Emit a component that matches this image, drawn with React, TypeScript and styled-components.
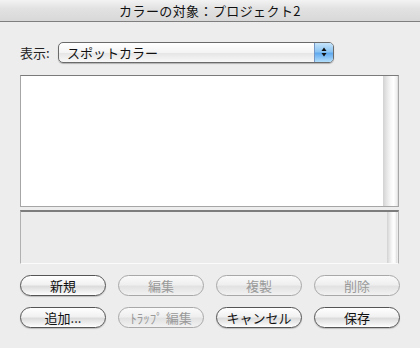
import React from "react";
import styled, { createGlobalStyle, css } from "styled-components";

const Global = createGlobalStyle`
  html, body { margin: 0; padding: 0; background: #ededed; }
  body { font-family: "Noto Sans CJK JP", "Noto Sans", sans-serif; }
`;

const Window = styled.div`
  width: 420px;
  height: 348px;
  background: #ededed;
  display: flex;
  flex-direction: column;
  overflow: hidden;
`;

const TitleBar = styled.div`
  height: 21px;
  border-bottom: 1px solid #7f7f7f;
  background: linear-gradient(#f3f3f3, #e2e2e2 40%, #d8d8d8);
  display: flex;
  align-items: center;
  justify-content: center;
  font-size: 13px;
  color: #111;
  letter-spacing: 0.4px;
`;

const Body = styled.div`
  padding: 19px 21px 0 20px;
  display: flex;
  flex-direction: column;
`;

const ShowRow = styled.div`
  display: flex;
  align-items: center;
  gap: 4px;
  height: 22px;
`;

const Label = styled.span`
  font-size: 13px;
  color: #222;
  width: 34px;
`;

const Popup = styled.div`
  width: 274px;
  height: 19px;
  border: 1px solid #6a6a6a;
  border-radius: 5px;
  background: linear-gradient(#ffffff, #f4f4f4 50%, #e6e6e6 55%, #f8f8f8);
  display: flex;
  align-items: center;
  overflow: hidden;
  box-shadow: 0 1px 1px rgba(0,0,0,0.25);
`;

const PopupText = styled.span`
  flex: 1;
  font-size: 13px;
  color: #111;
  padding-left: 8px;
`;

const PopupArrows = styled.div`
  width: 18px;
  align-self: stretch;
  background: linear-gradient(#c6e4fb, #8cc4f2 45%, #62aaef 55%, #b4defc);
  border-left: 1px solid #7696c4;
  display: flex;
  align-items: center;
  justify-content: center;
`;

const ListBox = styled.div`
  margin-top: 12px;
  height: 130px;
  border: 1px solid #a6a6a6;
  border-top-color: #7a7a7a;
  background: #fff;
  display: flex;
  justify-content: flex-end;
`;

const Track = styled.div<{ $short?: boolean }>`
  width: 15px;
  background: linear-gradient(90deg, #d2d2d2, #e6e6e6 25%, #f7f7f7 50%, #ffffff 70%, #f0f0f0 90%, #d8d8d8);
  ${(p) => p.$short && css`width: 10px; margin-right: 1px;`}
`;

const InfoBox = styled.div`
  margin-top: 3px;
  height: 51px;
  border: 1px solid #b0b0b0;
  border-top: 2px solid #7d7d7d;
  border-bottom-color: #fbfbfb;
  background: #ececec;
  display: flex;
  justify-content: flex-end;
`;

const Buttons = styled.div`
  margin-top: 11px;
  display: grid;
  grid-template-columns: repeat(4, 86px);
  column-gap: 12px;
  row-gap: 11px;
`;

const Btn = styled.div<{ $disabled?: boolean }>`
  height: 19px;
  border: 1px solid #555;
  border-radius: 11px;
  background: linear-gradient(#ffffff, #f1f1f1 45%, #dcdcdc 55%, #f6f6f6 90%, #ffffff);
  display: flex;
  align-items: center;
  justify-content: center;
  font-size: 13px;
  color: #111;
  box-shadow: 0 1px 1px rgba(0,0,0,0.2);
  white-space: nowrap;
  ${(p) =>
    p.$disabled &&
    css`
      border-color: #a8a8a8;
      color: #9a9a9a;
      box-shadow: none;
      background: linear-gradient(#fafafa, #efefef 45%, #e2e2e2 55%, #f2f2f2);
    `}
`;

export default function App() {
  return (
    <Window>
      <Global />
      <TitleBar>カラーの対象：プロジェクト2</TitleBar>
      <Body>
        <ShowRow>
          <Label>表示:</Label>
          <Popup>
            <PopupText>スポットカラー</PopupText>
            <PopupArrows>
              <svg width="8" height="12" viewBox="0 0 8 12">
                <polygon points="4,1.5 6.5,5 1.5,5" fill="#111" />
                <polygon points="1.5,7 6.5,7 4,10.5" fill="#111" />
              </svg>
            </PopupArrows>
          </Popup>
        </ShowRow>
        <ListBox>
          <Track />
        </ListBox>
        <InfoBox>
          <Track $short />
        </InfoBox>
        <Buttons>
          <Btn>新規</Btn>
          <Btn $disabled>編集</Btn>
          <Btn $disabled>複製</Btn>
          <Btn $disabled>削除</Btn>
          <Btn>追加...</Btn>
          <Btn $disabled>ﾄﾗｯﾌﾟ 編集</Btn>
          <Btn>キャンセル</Btn>
          <Btn>保存</Btn>
        </Buttons>
      </Body>
    </Window>
  );
}
